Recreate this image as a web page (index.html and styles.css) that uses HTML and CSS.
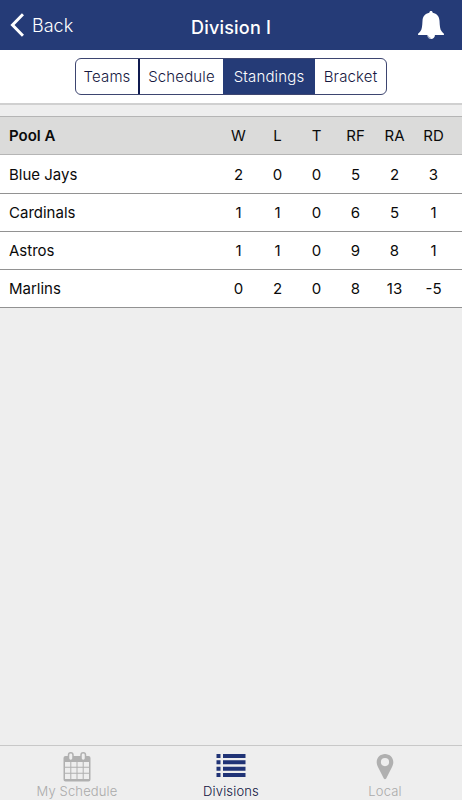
FILE: index.html
```html
<!DOCTYPE html>
<html lang="en">
<head>
    <meta charset="UTF-8">
    <meta name="viewport" content="width=device-width, initial-scale=1.0">
    <title>Division I</title>
    <link rel="stylesheet" href="styles.css">
</head>
<body>
    <header class="navbar">
        <a class="back" href="#">
            <svg width="14" height="24" viewBox="0 0 14 24"><path d="M13 1.200 2.500 12 13 22.800" fill="none" stroke="#fff" stroke-width="3"/></svg>
            <span>Back</span>
        </a>
        <h1>Division I</h1>
        <a class="alerts" href="#" aria-label="Alerts">
            <svg width="26" height="29" viewBox="0 0 26 29" fill="#fff">
                <path d="M13 0c1 0 1.600.7 1.700 1.700 4.300.8 6.500 3.800 6.800 8 .3 5 .4 8.300 2.100 10.500.8 1.100 1.800 1.800 2.300 2.600.3.700 0 1.200-.8 1.200H.9c-.8 0-1.100-.5-.8-1.200.5-.8 1.500-1.500 2.300-2.600 1.700-2.200 1.800-5.500 2.100-10.500.3-4.200 2.500-7.200 6.800-8C11.400.7 12 0 13 0z"/>
                <path d="M9.200 23.500h7.800c0 2.800-1.600 4.500-4 4.500s-3.800-1.700-3.800-4.500z"/>
                <path d="M9.700 24.600c.3 1.600 1.300 2.500 2.800 2.600" fill="none" stroke="#253b77" stroke-width=".7"/>
            </svg>
        </a>
    </header>

    <div class="toolbar">
        <div class="segments">
            <a class="teams" href="#">Teams</a>
            <a class="schedule" href="#">Schedule</a>
            <a class="standings active" href="#">Standings</a>
            <a class="bracket" href="#">Bracket</a>
        </div>
    </div>

    <main>
        <table class="pool">
            <thead>
                <tr><th class="team">Pool A</th><th>W</th><th>L</th><th>T</th><th>RF</th><th>RA</th><th>RD</th></tr>
            </thead>
            <tbody>
                <tr><td class="team">Blue Jays</td><td>2</td><td>0</td><td>0</td><td>5</td><td>2</td><td>3</td></tr>
                <tr><td class="team">Cardinals</td><td>1</td><td>1</td><td>0</td><td>6</td><td>5</td><td>1</td></tr>
                <tr><td class="team">Astros</td><td>1</td><td>1</td><td>0</td><td>9</td><td>8</td><td>1</td></tr>
                <tr><td class="team">Marlins</td><td>0</td><td>2</td><td>0</td><td>8</td><td>13</td><td>-5</td></tr>
            </tbody>
        </table>
    </main>

    <nav class="tabbar">
        <a href="#">
            <svg width="28" height="30" viewBox="0 0 28 30">
                <path fill="#b0b0b0" fill-rule="evenodd" d="M2.500 4H25.500Q27.500 4 27.500 6V27.500Q27.500 29.500 25.500 29.500H2.500Q.5 29.500 .5 27.500V6Q.5 4 2.500 4zM2 10v4.700h5.300V10zM8.300 10v4.700h5.200V10zM14.500 10v4.700h5.200V10zM20.700 10v4.700H26V10zM2 15.700v5h5.300v-5zM8.300 15.700v5h5.200v-5zM14.500 15.700v5h5.200v-5zM20.700 15.700v5H26v-5zM2 21.700V27h5.300v-5.300zM8.300 21.700V27h5.200v-5.300zM14.500 21.700V27h5.200v-5.300zM20.700 21.700V27H26v-5.300z"/>
                <rect x="5.500" y=".8" width="4.500" height="7.700" rx="2.200" fill="#eee" stroke="#b0b0b0" stroke-width="1.500"/>
                <rect x="18" y=".8" width="4.500" height="7.700" rx="2.200" fill="#eee" stroke="#b0b0b0" stroke-width="1.500"/>
            </svg>
            <span>My Schedule</span>
        </a>
        <a class="current" href="#">
            <svg width="30" height="30" viewBox="0 0 30 30" fill="#203376">
                <path d="M.5 2h4v4h-4zM7 2h22.500v4H7zM.5 8.300h4v4h-4zM7 8.300h22.500v4H7zM.5 14.700h4v4h-4zM7 14.700h22.500v4H7zM.5 21h4v4h-4zM7 21h22.500v4H7z"/>
            </svg>
            <span>Divisions</span>
        </a>
        <a href="#">
            <svg width="18" height="30" viewBox="0 0 18 30">
                <path fill="#b0b0b0" fill-rule="evenodd" d="M9 2C4.300 2 .7 5.600.7 10c0 2 .6 3.600 1.400 5.300L7.800 26.400c.5 1 1.900 1 2.400 0l5.700-11.100c.8-1.700 1.400-3.300 1.400-5.300 0-4.400-3.600-8-8.300-8zM9 6a4.100 4.100 0 1 1 0 8.200A4.100 4.100 0 0 1 9 6z"/>
            </svg>
            <span>Local</span>
        </a>
    </nav>
</body>
</html>
```

FILE: styles.css
```css
* {
    box-sizing: border-box;
}
body {
    margin: 0;
    height: 100vh;
    display: flex;
    flex-direction: column;
    background: #eee;
    color: #0a0a0a;
    font-family: Inter, "Liberation Sans", sans-serif;
    font-size: 15px;
}
a {
    color: inherit;
    text-decoration: none;
}
svg {
    display: block;
}
.navbar {
    display: grid;
    grid-template-columns: 1fr auto 1fr;
    align-items: center;
    height: 50px;
    padding: 0 18px 0 10px;
    background: #253b77;
    color: #fff;
}
.back {
    display: flex;
    align-items: center;
    gap: 8px;
    font-size: 18px;
    font-weight: 300;
}
.navbar h1 {
    margin: 4px 0 0 8px;
    font-size: 18px;
    font-weight: 500;
    letter-spacing: 0.2px;
}
.alerts {
    justify-self: end;
}
.toolbar {
    display: flex;
    justify-content: center;
    height: 55px;
    padding-top: 8px;
    background: #fff;
    border-bottom: 2px solid #d0d0d0;
}
.segments {
    display: flex;
    height: 37px;
    border: 1px solid #3d4570;
    border-radius: 6px;
    overflow: hidden;
    color: #16183f;
    line-height: 35px;
    text-align: center;
    font-weight: 350;
    letter-spacing: 0.15px;
}
.teams {
    width: 64px;
    border-right: 2px solid #101b50;
}
.schedule {
    width: 83px;
}
.standings {
    width: 92px;
}
.bracket {
    width: 71px;
}
.segments .active {
    background: #253b77;
    color: #fff;
}
main {
    flex: 1;
    padding-top: 11px;
}
.pool {
    width: 100%;
    table-layout: fixed;
    border-collapse: separate;
    border-spacing: 0;
    background: #fff;
}
.pool th, .pool td {
    width: 39px;
    height: 38px;
    padding: 0;
    border-bottom: 1px solid #929292;
    font-weight: 400;
    text-align: center;
}
.pool th {
    height: 39px;
    background: #dbdbda;
    border-top: 1px solid #b5b5b5;
    border-bottom-color: #b5b5b5;
}
.pool tbody tr:first-child td {
    height: 39px;
    padding-top: 1px;
}
.pool th:last-child, .pool td:last-child {
    width: 48px;
    padding-right: 9px;
}
.pool .team {
    width: auto;
    padding-left: 9px;
    text-align: left;
}
.pool th.team {
    font-weight: 600;
}
.tabbar {
    display: flex;
    height: 55px;
    border-top: 1px solid #c8c8c8;
    color: #aaa;
    font-size: 13px;
    font-weight: 300;
    letter-spacing: 0.15px;
}
.tabbar a {
    flex: 1;
    display: flex;
    flex-direction: column;
    align-items: center;
    padding-top: 6px;
}
.tabbar span {
    margin-top: 1px;
    line-height: 16px;
}
.tabbar .current {
    color: #10133f;
    font-weight: 350;
}
```
